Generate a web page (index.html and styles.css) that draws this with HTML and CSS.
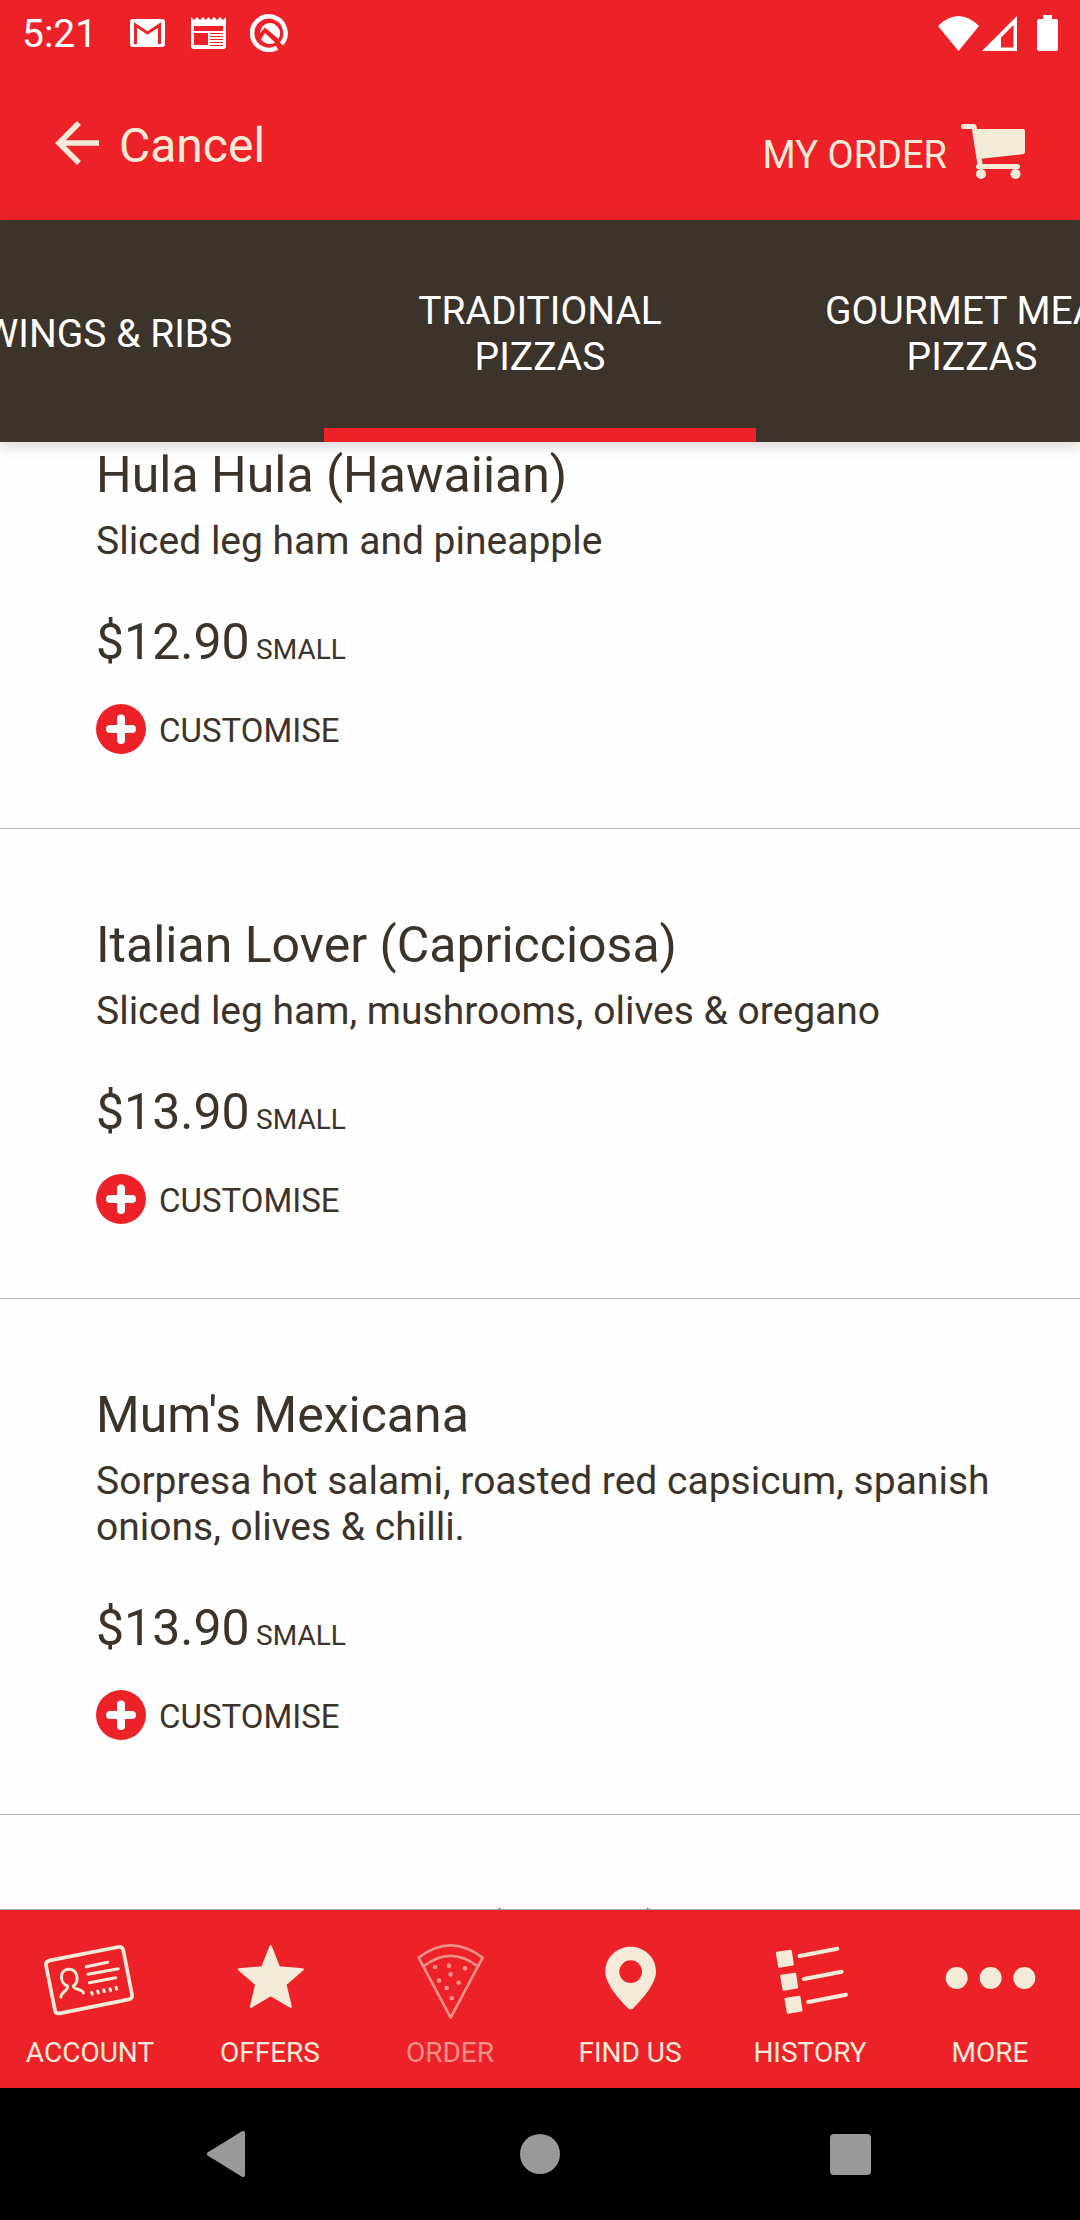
FILE: index.html
```html
<!DOCTYPE html>
<html lang="en">
<head>
    <title>Traditional Pizzas</title>
    <meta charset="UTF-8" />
    <meta name="viewport" content="width=device-width, initial-scale=1" />
    <link rel="stylesheet" href="styles.css">
</head>
<body>
    <div class="statusBar">
        <span class="time">5:21</span>
        <svg class="mail" width="35" height="29" viewBox="0 0 35 29">
            <rect width="35" height="28" rx="3" fill="#fff"/>
            <path d="M5.500 25V6L17.500 14L29.500 6V25" fill="none" stroke="#ed2228" stroke-width="3"/>
        </svg>
        <svg class="news" width="35" height="32" viewBox="0 0 35 32">
            <path d="M0 0L3 3L6 0L9 3L12 0L15 3L17.500 0L20 3L23 0L26 3L29 0L32 3L35 0V29Q35 32 32 32H3Q0 32 0 29Z" fill="#fff"/>
            <path d="M3 9H32V14H3ZM3 16H17V28H3ZM19 16H32V17H19ZM19 19H32V20H19ZM19 22H32V23H19ZM19 25H32V26H19ZM19 28H32V29H19Z" fill="#ed2228"/>
        </svg>
        <svg class="quick" width="38" height="38" viewBox="0 0 38 38">
            <path d="M31.500 30A16.700 16.700 0 1 0 27 33.700" fill="none" stroke="#fff" stroke-width="4.500"/>
            <path d="M19 9A10.500 10.500 0 0 1 28.500 25L15 13.500L10 19A10.500 10.500 0 0 1 19 9ZM15 19L25 28.500A10.500 10.500 0 0 1 11 25.500Z" fill="#fff"/>
        </svg>
        <div class="phoneState">
            <svg width="41" height="35" viewBox="0 0 41 35"><path d="M0 10Q20.500-10 41 10L20.500 35Z" fill="#fff"/></svg>
            <svg width="35" height="35" viewBox="0 0 35 35"><path d="M35 0V35H0ZM31.500 9L19 21.500V31.500H31.500Z" fill="#fff" fill-rule="evenodd"/></svg>
            <svg class="battery" width="21" height="36" viewBox="0 0 21 36"><path d="M6 0H15V4H19Q21 4 21 6V34Q21 36 19 36H2Q0 36 0 34V6Q0 4 2 4H6Z" fill="#fff"/></svg>
        </div>
    </div>

    <header class="appBar">
        <a class="cancel" href="#">
            <svg width="44" height="44" viewBox="0 0 44 44"><path d="M24 2L4 22L24 42M4 22H44" fill="none" stroke="#f3ead8" stroke-width="5.500"/></svg>
            <span>Cancel</span>
        </a>
        <a class="myOrder" href="#">
            <span>MY ORDER</span>
            <svg width="64" height="55" viewBox="0 0 64 55" fill="#f3ead8">
                <path d="M2.500 2.500H13L19 40" fill="none" stroke="#f3ead8" stroke-width="5" stroke-linecap="round" stroke-linejoin="round"/>
                <path d="M12 5H62Q64 5 64 7V28Q64 30 62 30.300L18 35Z"/>
                <rect x="15" y="40" width="44" height="5" rx="2.500"/>
                <circle cx="20" cy="50" r="5"/>
                <circle cx="54.500" cy="50" r="5"/>
            </svg>
        </a>
    </header>

    <nav class="categories">
        <a href="#">WINGS &amp; RIBS</a>
        <a class="active" href="#">TRADITIONAL<br>PIZZAS</a>
        <a href="#">GOURMET MEAT<br>PIZZAS</a>
    </nav>

    <main class="menu">
        <div class="menuList">
            <article class="item">
                <h2>Hula Hula (Hawaiian)</h2>
                <p class="description">Sliced leg ham and pineapple</p>
                <p class="price">$12.90 <small>SMALL</small></p>
                <button type="button" class="customise">
                    <svg width="50" height="50" viewBox="0 0 50 50"><circle cx="25" cy="25" r="25" fill="#ed2228"/><path d="M14 25H36M25 14.500V36" stroke="#fff" stroke-width="8" stroke-linecap="round"/></svg>
                    <span>CUSTOMISE</span>
                </button>
            </article>
            <article class="item">
                <h2>Italian Lover (Capricciosa)</h2>
                <p class="description">Sliced leg ham, mushrooms, olives &amp; oregano</p>
                <p class="price">$13.90 <small>SMALL</small></p>
                <button type="button" class="customise">
                    <svg width="50" height="50" viewBox="0 0 50 50"><circle cx="25" cy="25" r="25" fill="#ed2228"/><path d="M14 25H36M25 14.500V36" stroke="#fff" stroke-width="8" stroke-linecap="round"/></svg>
                    <span>CUSTOMISE</span>
                </button>
            </article>
            <article class="item">
                <h2>Mum's Mexicana</h2>
                <p class="description">Sorpresa hot salami, roasted red capsicum, spanish onions, olives &amp; chilli.</p>
                <p class="price">$13.90 <small>SMALL</small></p>
                <button type="button" class="customise">
                    <svg width="50" height="50" viewBox="0 0 50 50"><circle cx="25" cy="25" r="25" fill="#ed2228"/><path d="M14 25H36M25 14.500V36" stroke="#fff" stroke-width="8" stroke-linecap="round"/></svg>
                    <span>CUSTOMISE</span>
                </button>
            </article>
            <article class="item">
                <h2>Neapolitan Lover (Napoli)</h2>
            </article>
        </div>
    </main>

    <nav class="tabBar">
        <a href="#">
            <svg width="100" height="90" viewBox="120 105 300 270" fill="none" stroke="#f3ead8" stroke-width="9" stroke-linecap="round">
                <path d="M150 181L355 141Q367 139 370 151L396 284Q398 296 387 298L179 340Q167 342 165 331L138 196Q136 184 150 181Z" stroke-width="11"/>
                <path d="M183 291C181 275 207 273 202 258C180 250 176 211 205 208C235 207 238 246 220 258C220 270 250 267 250 279"/>
                <path d="M259 200L323 187M264 223L355 206M268 248L347 233"/>
                <path d="M275 277L277 283M293 273L295 279M311 269L313 275M330 266L332 272M348 262L350 268"/>
            </svg>
            <span>ACCOUNT</span>
        </a>
        <a href="#">
            <svg width="100" height="90" viewBox="660 105 300 270" fill="#f3ead8">
                <path d="M812 139L837 202L908 208L856 253L872 320L812 285L753 320L769 253L717 208L787 202Z" stroke="#f3ead8" stroke-width="7" stroke-linejoin="round"/>
            </svg>
            <span>OFFERS</span>
        </a>
        <a class="current" href="#">
            <svg width="100" height="90" viewBox="120 105 300 270" fill="none" stroke="#f59088" stroke-width="8" stroke-linejoin="round">
                <path d="M176 173Q271 99 368 173L272 353ZM192 198Q271 137 352 198"/>
                <g fill="#f59088" stroke="none">
                    <circle cx="225" cy="201" r="7"/><circle cx="267" cy="197" r="7"/><circle cx="315" cy="205" r="7"/><circle cx="272" cy="223" r="7"/>
                    <circle cx="237" cy="242" r="7"/><circle cx="296" cy="248" r="7"/><circle cx="260" cy="264" r="7"/><circle cx="275" cy="294" r="7"/>
                </g>
            </svg>
            <span>ORDER</span>
        </a>
        <a href="#">
            <svg width="100" height="90" viewBox="660 105 300 270" fill="#f3ead8">
                <path fill-rule="evenodd" d="M812 140C854 140 888 172 888 215C888 251 846 299 818 326Q812 330 806 326C778 299 736 251 736 215C736 172 770 140 812 140ZM812 181A34 34 0 1 0 812 249A34 34 0 1 0 812 181Z"/>
            </svg>
            <span>FIND US</span>
        </a>
        <a href="#">
            <svg width="100" height="90" viewBox="120 105 300 270" fill="#f3ead8" stroke="#f3ead8" stroke-linejoin="round" stroke-linecap="round">
                <path d="M171 159L212 153L218 193L178 200ZM184 228L225 222L231 262L191 269ZM197 297L238 291L244 331L204 338Z" stroke-width="7"/>
                <path d="M239 168L352 146M252 237L365 215M265 306L378 284" stroke-width="12"/>
            </svg>
            <span>HISTORY</span>
        </a>
        <a href="#">
            <svg width="100" height="90" viewBox="660 105 300 270" fill="#f3ead8">
                <circle cx="710" cy="234" r="33"/><circle cx="812" cy="234" r="33"/><circle cx="913" cy="234" r="33"/>
            </svg>
            <span>MORE</span>
        </a>
    </nav>

    <div class="systemBar">
        <button type="button" aria-label="Back"><svg width="48" height="46" viewBox="0 0 48 46"><path d="M37 2V44L3 23Z" fill="#999" stroke="#999" stroke-width="4" stroke-linejoin="round"/></svg></button>
        <button type="button" aria-label="Home"><svg width="40" height="40" viewBox="0 0 40 40"><circle cx="20" cy="20" r="20" fill="#999"/></svg></button>
        <button type="button" aria-label="Recent apps"><svg width="41" height="41" viewBox="0 0 41 41"><rect width="41" height="41" rx="4" fill="#999"/></svg></button>
    </div>
</body>
</html>
```

FILE: styles.css
```css
*
{
    box-sizing: border-box;
}

body
{
    display: flex;
    flex-direction: column;
    height: 100vh;
    margin: 0;
    overflow: hidden;
    font-family: Roboto, "Liberation Sans", sans-serif;
    font-size: 39px;
    line-height: 46px;
    color: #3c332a;
    background-color: #fefefe;
}

a
{
    color: inherit;
    text-decoration: none;
}

svg
{
    display: block;
    flex: none;
}

button
{
    padding: 0;
    border: 0;
    background: none;
    font: inherit;
    color: inherit;
    cursor: pointer;
}

.statusBar
{
    display: flex;
    flex: none;
    align-items: center;
    height: 66px;
    padding: 0 22px;
    color: #fff;
    background-color: #ed2228;
}

.time
{
    padding-top: 2px;
}

.mail
{
    margin-left: 33px;
}

.news
{
    margin-left: 26px;
}

.quick
{
    margin-left: 24px;
}

.phoneState
{
    display: flex;
    align-items: center;
    gap: 3px;
    margin-left: auto;
}

.battery
{
    margin-left: 17px;
}

.appBar
{
    display: flex;
    flex: none;
    justify-content: space-between;
    height: 154px;
    padding: 0 55px;
    color: #f3ead8;
    background-color: #ed2228;
}

.cancel, .myOrder
{
    display: flex;
    align-items: center;
}

.cancel
{
    gap: 20px;
    font-size: 48px;
}

.cancel span
{
    padding-top: 6px;
}

.myOrder
{
    gap: 14px;
    padding-top: 8px;
    font-size: 38px;
}

.myOrder span
{
    padding-top: 16px;
}

.myOrder svg
{
    margin-top: 8px;
}

.categories
{
    position: relative;
    z-index: 1;
    display: flex;
    flex: none;
    height: 222px;
    color: #fff;
    background-color: #3c332a;
    box-shadow: 0 4px 14px rgba(0, 0, 0, 0.16);
}

.categories a
{
    display: flex;
    flex: 0 0 40%;
    align-items: center;
    justify-content: center;
    padding-top: 20px;
    border-bottom: 14px solid transparent;
    text-align: center;
    white-space: nowrap;
}

.categories a:first-child
{
    margin-left: -10%;
}

.categories .active
{
    border-color: #ed2228;
}

.menu
{
    flex: 1;
    min-height: 0;
    overflow: hidden;
}

/* list is scrolled a little way under the categories */
.menuList
{
    margin-top: -83px;
}

.item
{
    padding: 87px 80px 74px 96px;
    border-bottom: 1px solid #bcbcbe;
}

.item h2
{
    margin: 0 0 13px;
    font-size: 50px;
    font-weight: normal;
    line-height: 59px;
}

.item p
{
    margin: 0;
}

.item .price
{
    margin: 49px 0 32px;
    font-size: 50px;
    line-height: 59px;
}

.price small
{
    margin-left: -6px;
    font-size: 28px;
    line-height: 28px;
}

.customise
{
    display: flex;
    align-items: center;
    gap: 13px;
    font-size: 33px;
}

.customise span
{
    padding-top: 4px;
}

.tabBar
{
    display: flex;
    flex: none;
    height: 179px;
    border-top: 1px solid #a9a3a5;
    font-size: 28px;
    line-height: 34px;
    color: #f3ead8;
    background-color: #ed2228;
}

.tabBar a
{
    display: flex;
    flex: 1;
    flex-direction: column;
    align-items: center;
    gap: 11px;
    padding-top: 25px;
}

.tabBar .current
{
    color: #f59088;
}

.systemBar
{
    display: flex;
    flex: none;
    height: 132px;
    padding: 0 75px;
    background-color: #000;
}

.systemBar button
{
    display: flex;
    flex: 1;
    align-items: center;
    justify-content: center;
}
```
